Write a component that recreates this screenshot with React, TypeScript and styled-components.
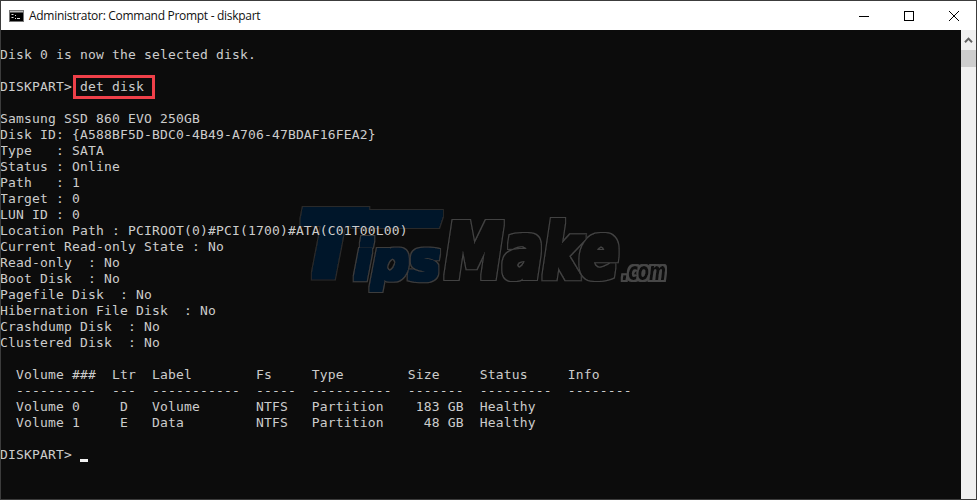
import React from "react";
import styled, { createGlobalStyle } from "styled-components";

const Global = createGlobalStyle`
  html, body { margin: 0; padding: 0; background: #0c0c0c; overflow: hidden; }
`;

const Window = styled.div`
  width: 977px;
  height: 500px;
  box-sizing: border-box;
  border: 1px solid #3c3c3c;
  display: flex;
  flex-direction: column;
`;

const TitleBar = styled.div`
  height: 29px;
  flex: none;
  background: #fff;
  display: flex;
  align-items: center;
  padding-left: 8px;
  gap: 5px;
`;

const Title = styled.div`
  font-family: "Open Sans", "Noto Sans", sans-serif;
  font-size: 12px;
  letter-spacing: -0.29px;
  color: #111;
  white-space: nowrap;
  flex: 1;
`;

const Controls = styled.div`
  display: flex;
  height: 100%;
`;

const Control = styled.div`
  width: 45px;
  height: 100%;
  display: flex;
  align-items: center;
  justify-content: center;
`;

const Body = styled.div`
  flex: 1;
  display: flex;
  min-height: 0;
`;

const Console = styled.div`
  position: relative;
  flex: 1;
  background: #0c0c0c;
  padding-top: 17px;
  overflow: hidden;
`;

const Line = styled.div`
  position: relative;
  height: 16px;
  line-height: 16px;
  font-family: "DejaVu Sans Mono", monospace;
  font-size: 13px;
  letter-spacing: 0.17px;
  color: #cccccc;
  white-space: pre;
  margin-left: -1px;
`;

const Highlight = styled.span`
  position: relative;
  &::after {
    content: "";
    position: absolute;
    left: -7px;
    right: -11px;
    top: -4px;
    bottom: -5px;
    border: 3px solid #ef4049;
  }
`;

const Cursor = styled.span`
  display: inline-block;
  width: 8px;
  height: 3px;
  background: #f2f2f2;
  vertical-align: -3px;
`;

const Watermark = styled.svg`
  position: absolute;
  left: 0;
  top: 0;
  pointer-events: none;
`;

const Scrollbar = styled.div`
  width: 15px;
  flex: none;
  margin-left: 1px;
  background: #f0f0f0;
  display: flex;
  flex-direction: column;
`;

const ScrollArrow = styled.div`
  height: 20px;
  display: flex;
  align-items: center;
  justify-content: center;
`;

const Thumb = styled.div`
  height: 17px;
  background: #cdcdcd;
`;

const lines: string[] = [
  "Disk 0 is now the selected disk.",
  "",
  "@",
  "",
  "Samsung SSD 860 EVO 250GB",
  "Disk ID: {A588BF5D-BDC0-4B49-A706-47BDAF16FEA2}",
  "Type   : SATA",
  "Status : Online",
  "Path   : 1",
  "Target : 0",
  "LUN ID : 0",
  "Location Path : PCIROOT(0)#PCI(1700)#ATA(C01T00L00)",
  "Current Read-only State : No",
  "Read-only  : No",
  "Boot Disk  : No",
  "Pagefile Disk  : No",
  "Hibernation File Disk  : No",
  "Crashdump Disk  : No",
  "Clustered Disk  : No",
  "",
  "  Volume ###  Ltr  Label        Fs     Type        Size     Status     Info",
  "  ----------  ---  -----------  -----  ----------  -------  ---------  --------",
  "  Volume 0     D   Volume       NTFS   Partition    183 GB  Healthy",
  "  Volume 1     E   Data         NTFS   Partition     48 GB  Healthy",
  "",
  "#",
];

function OutlineFilter(props: { id: string; fill: string; edge: string; inner: number; outer: number }) {
  const { id, fill, edge, inner, outer } = props;
  return (
    <filter id={id} x="-20%" y="-20%" width="140%" height="140%">
      <feMorphology in="SourceAlpha" operator="dilate" radius={outer} result="o" />
      <feFlood floodColor={edge} />
      <feComposite in2="o" operator="in" result="edge" />
      <feMorphology in="SourceAlpha" operator="dilate" radius={inner} result="i" />
      <feFlood floodColor={fill} />
      <feComposite in2="i" operator="in" result="fill" />
      <feMerge>
        <feMergeNode in="edge" />
        <feMergeNode in="fill" />
      </feMerge>
    </filter>
  );
}

export default function App() {
  return (
    <Window>
      <Global />
      <TitleBar>
        <svg width="15" height="12" viewBox="0 0 15 12">
          <rect x="0" y="0" width="15" height="12" fill="#000" />
          <rect x="0.5" y="0.5" width="14" height="11" fill="none" stroke="#777" />
          <rect x="1" y="1" width="13" height="1.5" fill="#bbb" />
          <path d="M2.5 4h2v1h-2zM2.5 7h2v1h-2zM6 8h1v1H6zM6 5h1v1H6zM8 8h3v1H8z" fill="#ddd" />
        </svg>
        <Title>Administrator: Command Prompt - diskpart</Title>
        <Controls>
          <Control>
            <svg width="10" height="10" viewBox="0 0 10 10">
              <path d="M0 5.5h10" stroke="#000" strokeWidth="1" />
            </svg>
          </Control>
          <Control>
            <svg width="10" height="10" viewBox="0 0 10 10">
              <rect x="0.5" y="0.5" width="9" height="9" fill="none" stroke="#000" />
            </svg>
          </Control>
          <Control>
            <svg width="10" height="10" viewBox="0 0 10 10">
              <path d="M0 0l10 10M10 0L0 10" stroke="#000" strokeWidth="1" />
            </svg>
          </Control>
        </Controls>
      </TitleBar>
      <Body>
        <Console>
          <Watermark width="960" height="470" viewBox="1 30 960 470">
            <defs>
              <OutlineFilter id="wmNavy" fill="#06192b" edge="#2b2b2b" inner={2.5} outer={3.5} />
              <OutlineFilter id="wmIps" fill="#06192b" edge="#3c3c3c" inner={1.5} outer={2.7} />
              <OutlineFilter id="wmMake" fill="#0b0b0b" edge="#434343" inner={1.5} outer={3.2} />
              <OutlineFilter id="wmCom" fill="#0b0b0b" edge="#474747" inner={0.4} outer={1.6} />
            </defs>
            <g fontFamily="'DejaVu Sans', sans-serif" fontWeight="700" fontStyle="italic">
              <g filter="url(#wmNavy)">
                <text x="299" y="276" fontSize="90" fill="#fff">T</text>
                <polygon points="358,213 440,213 436,225 354,225" fill="#fff" />
              </g>
              <text x="354" y="279" fontSize="54" textLength="86" lengthAdjust="spacingAndGlyphs" fill="#fff" filter="url(#wmIps)">ips</text>
              <text x="445" y="278" fontSize="76" textLength="174" lengthAdjust="spacingAndGlyphs" fill="#fff" filter="url(#wmMake)">Make</text>
              <text x="622" y="280" fontSize="24" textLength="44" lengthAdjust="spacingAndGlyphs" fill="#fff" filter="url(#wmCom)">.com</text>
            </g>
          </Watermark>
          {lines.map((l, i) => {
            if (l === "@") {
              return (
                <Line key={i}>
                  DISKPART{">"} <Highlight>det disk</Highlight>
                </Line>
              );
            }
            if (l === "#") {
              return (
                <Line key={i}>
                  DISKPART{">"} <Cursor />
                </Line>
              );
            }
            return <Line key={i}>{l}</Line>;
          })}
        </Console>
        <Scrollbar>
          <ScrollArrow>
            <svg width="9" height="6" viewBox="0 0 9 6">
              <path d="M1 5.2L4.5 1.6 8 5.2" fill="none" stroke="#606060" strokeWidth="2" />
            </svg>
          </ScrollArrow>
          <Thumb />
        </Scrollbar>
      </Body>
    </Window>
  );
}
